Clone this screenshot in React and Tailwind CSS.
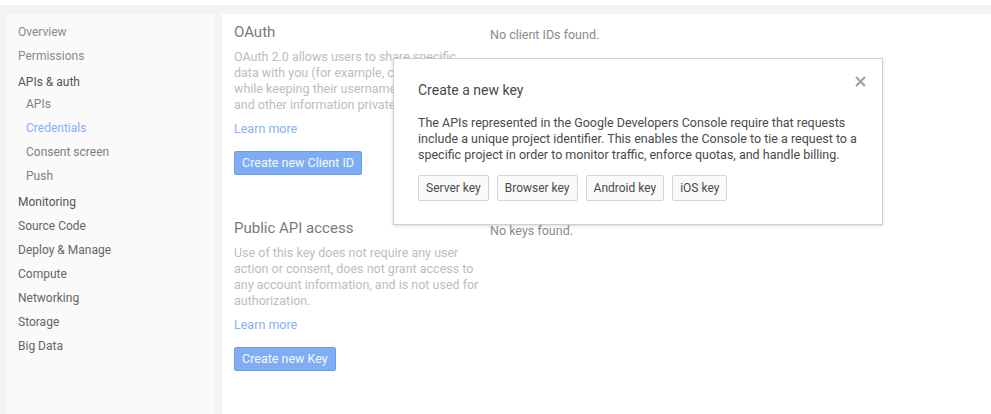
const NAV = [
  { label: 'Overview', kind: 'muted' },
  { label: 'Permissions', kind: 'muted' },
  { label: 'APIs & auth', kind: 'group', cls: 'mt-[2px]' },
  { label: 'APIs', kind: 'sub', cls: '-mt-[2px]' },
  { label: 'Credentials', kind: 'active' },
  { label: 'Consent screen', kind: 'sub' },
  { label: 'Push', kind: 'sub' },
  { label: 'Monitoring', kind: 'group', cls: 'mt-[2px]' },
  { label: 'Source Code', kind: 'top' },
  { label: 'Deploy & Manage', kind: 'top' },
  { label: 'Compute', kind: 'top' },
  { label: 'Networking', kind: 'top' },
  { label: 'Storage', kind: 'top' },
  { label: 'Big Data', kind: 'top' },
]

const KEY_TYPES = ['Server key', 'Browser key', 'Android key', 'iOS key']

function NavItem({ item }) {
  let color = 'text-[#666] pl-3'
  if (item.kind === 'muted') color = 'text-[#8a8a8a] pl-3'
  if (item.kind === 'group') color = 'text-[#555] pl-3'
  if (item.kind === 'sub') color = 'text-[#808080] pl-5'
  if (item.kind === 'active') color = 'text-[#86b1f5] pl-5'
  return (
    <div className={`h-6 leading-6 text-[12px] whitespace-nowrap cursor-pointer ${color} ${item.cls || ''}`}>
      {item.label}
    </div>
  )
}

function Section({ title, lines, button, empty, className }) {
  return (
    <div className={`flex ${className || ''}`}>
      <div className="w-[256px] ml-[12px]">
        <h2 className="text-[15px] leading-5 text-[#7a7a7a]">{title}</h2>
        <p className="mt-[7px] text-[12.5px] leading-4 text-[#bdbdbd] whitespace-nowrap">
          {lines.map((l, i) => (
            <span key={i} className="block">{l}</span>
          ))}
        </p>
        <a className="block mt-2 text-[12.5px] leading-4 text-[#86b1f5] cursor-pointer">Learn more</a>
        <button className="mt-[14px] h-6 px-[7px] rounded-[2px] border border-[#6e9de6] bg-[#80acf4] text-[12.5px] text-[#f4f8ff]">
          {button}
        </button>
      </div>
      <div className="pt-[5px] text-[12.5px] leading-4 text-[#8a8a8a]">{empty}</div>
    </div>
  )
}

export default function App() {
  return (
    <div className="min-h-screen flex flex-col bg-white font-['Roboto','Liberation_Sans',sans-serif]">
      <div className="h-[5px] bg-white" />
      <div className="flex-1 flex gap-2 pl-[6px] pt-[9px] bg-[#f3f3f3]">
        {/* sidebar */}
        <aside className="w-[208px] bg-[#fafafa] pt-[6px]">
          {NAV.map((item) => (
            <NavItem key={item.label} item={item} />
          ))}
        </aside>

        {/* credentials */}
        <main className="flex-1 relative bg-white pt-[8px]">
          <Section
            title="OAuth"
            lines={[
              'OAuth 2.0 allows users to share specific',
              'data with you (for example, contact lists)',
              'while keeping their usernames, passwords,',
              'and other information private.',
            ]}
            button="Create new Client ID"
            empty="No client IDs found."
          />
          <Section
            className="mt-[43px]"
            title="Public API access"
            lines={[
              'Use of this key does not require any user',
              'action or consent, does not grant access to',
              'any account information, and is not used for',
              'authorization.',
            ]}
            button="Create new Key"
            empty="No keys found."
          />

          {/* create key dialog */}
          <div className="absolute left-[171px] top-[44px] w-[490px] border border-[#cfcfcf] bg-white shadow-[0_1px_3px_rgba(0,0,0,0.15)] pt-[21px] pb-[23px] px-6">
            <button className="absolute right-[16px] top-[17px] text-[#a3a3a3]">
              <svg width="11" height="11" viewBox="0 0 11 11">
                <path d="M1 1L10 10M10 1L1 10" stroke="currentColor" strokeWidth="2.2" />
              </svg>
            </button>
            <h3 className="text-[14px] leading-5 text-[#4a4a4a]">Create a new key</h3>
            <p className="mt-[15px] text-[12.5px] leading-4 text-[#4a4a4a] whitespace-nowrap">
              The APIs represented in the Google Developers Console require that requests
              <br />
              include a unique project identifier. This enables the Console to tie a request to a
              <br />
              specific project in order to monitor traffic, enforce quotas, and handle billing.
            </p>
            <div className="mt-[12px] flex gap-2">
              {KEY_TYPES.map((k) => (
                <button
                  key={k}
                  className="h-[26px] px-[7px] rounded-[2px] border border-[#d4d4d4] bg-[#fafafa] text-[12px] text-[#4a4a4a]"
                >
                  {k}
                </button>
              ))}
            </div>
          </div>
        </main>
      </div>
    </div>
  )
}
